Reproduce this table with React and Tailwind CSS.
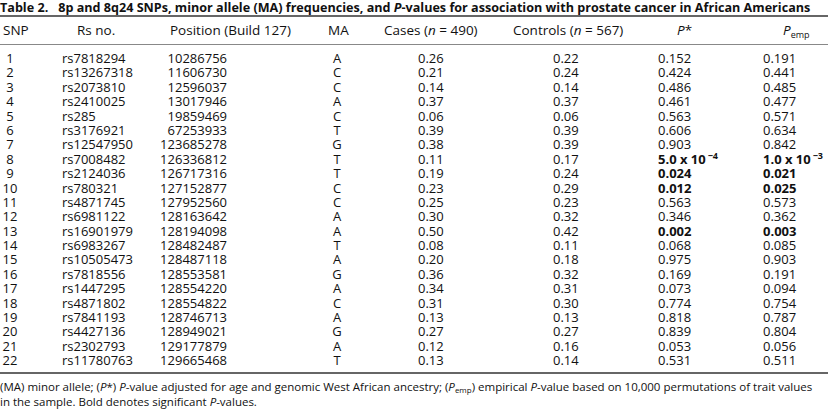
import React from "react";

const rows = [
  [1, "rs7818294", "10286756", "A", "0.26", "0.22", "0.152", "0.191"],
  [2, "rs13267318", "11606730", "C", "0.21", "0.24", "0.424", "0.441"],
  [3, "rs2073810", "12596037", "C", "0.14", "0.14", "0.486", "0.485"],
  [4, "rs2410025", "13017946", "A", "0.37", "0.37", "0.461", "0.477"],
  [5, "rs285", "19859469", "C", "0.06", "0.06", "0.563", "0.571"],
  [6, "rs3176921", "67253933", "T", "0.39", "0.39", "0.606", "0.634"],
  [7, "rs12547950", "123685278", "G", "0.38", "0.39", "0.903", "0.842"],
  [8, "rs7008482", "126336812", "T", "0.11", "0.17", "E4", "E3"],
  [9, "rs2124036", "126717316", "T", "0.19", "0.24", "0.024", "0.021", true],
  [10, "rs780321", "127152877", "C", "0.23", "0.29", "0.012", "0.025", true],
  [11, "rs4871745", "127952560", "C", "0.25", "0.23", "0.563", "0.573"],
  [12, "rs6981122", "128163642", "A", "0.30", "0.32", "0.346", "0.362"],
  [13, "rs16901979", "128194098", "A", "0.50", "0.42", "0.002", "0.003", true],
  [14, "rs6983267", "128482487", "T", "0.08", "0.11", "0.068", "0.085"],
  [15, "rs10505473", "128487118", "A", "0.20", "0.18", "0.975", "0.903"],
  [16, "rs7818556", "128553581", "G", "0.36", "0.32", "0.169", "0.191"],
  [17, "rs1447295", "128554220", "A", "0.34", "0.31", "0.073", "0.094"],
  [18, "rs4871802", "128554822", "C", "0.31", "0.30", "0.774", "0.754"],
  [19, "rs7841193", "128746713", "A", "0.13", "0.13", "0.818", "0.787"],
  [20, "rs4427136", "128949021", "G", "0.27", "0.27", "0.839", "0.804"],
  [21, "rs2302793", "129177879", "A", "0.12", "0.16", "0.053", "0.056"],
  [22, "rs11780763", "129665468", "T", "0.13", "0.14", "0.531", "0.511"],
];

const grid =
  "grid grid-cols-[50px_100px_150px_74px_121px_140px_105px_88px] whitespace-nowrap";

function PVal({ v, bold }) {
  if (v === "E4")
    return (
      <span className="font-bold">
        5.0 x 10<sup className="text-[9px] ml-[2px]">−4</sup>
      </span>
    );
  if (v === "E3")
    return (
      <span className="font-bold">
        1.0 x 10<sup className="text-[9px] ml-[2px]">−3</sup>
      </span>
    );
  return <span className={bold ? "font-bold" : ""}>{v}</span>;
}

export default function App() {
  return (
    <div
      className="w-[828px] h-[411px] bg-white text-[#111] overflow-hidden"
      style={{ fontFamily: '"Open Sans", "Noto Sans", sans-serif' }}
    >
      <div className="h-[15px] leading-[15px] text-[12.6px] font-bold whitespace-nowrap">
        <span>Table 2.</span>
        <span className="ml-[10px]">
          8p and 8q24 SNPs, minor allele (MA) frequencies, and <i>P</i>-values for
          association with prostate cancer in African Americans
        </span>
      </div>
      <div className="h-[2px] bg-[#666]" />
      <div className={`${grid} h-[27px] items-center text-[13.5px]`}>
        <div className="pl-[3px]">SNP</div>
        <div className="pl-[27px]">Rs no.</div>
        <div className="pl-[20px]">Position (Build 127)</div>
        <div className="pl-[28px]">MA</div>
        <div className="pl-[10px]">
          Cases (<i>n</i> = 490)
        </div>
        <div className="pl-[18px]">
          Controls (<i>n</i> = 567)
        </div>
        <div className="pl-[42px]">
          <i>P</i>*
        </div>
        <div className="pl-[43px]">
          <i>P</i>
          <sub className="text-[9px]">emp</sub>
        </div>
      </div>
      <div className="h-px bg-[#888]" />
      <div className="pt-[6px] text-[13px]">
        {rows.map((r) => (
          <div key={r[0]} className={`${grid} h-[14.4px] leading-[14.4px]`}>
            <div className="w-[20px] text-center">{r[0]}</div>
            <div className="pl-[12px]">{r[1]}</div>
            <div className="text-right pr-[73px]">{r[2]}</div>
            <div className="text-center">{r[3]}</div>
            <div className="pl-[44px]">{r[4]}</div>
            <div className="pl-[58px]">{r[5]}</div>
            <div className="pl-[23px]">
              <PVal v={r[6]} bold={r[8]} />
            </div>
            <div className="pl-[23px]">
              <PVal v={r[7]} bold={r[8]} />
            </div>
          </div>
        ))}
      </div>
      <div className="mt-[4px] h-[2px] bg-[#666]" />
      <div className="pt-[5px] text-[11.5px] leading-[15px] whitespace-nowrap">
        (MA) minor allele; (<i>P</i>*) <i>P</i>-value adjusted for age and genomic West
        African ancestry; (<i>P</i>
        <sub className="text-[8px]">emp</sub>) empirical <i>P</i>-value based on 10,000
        permutations of trait values
        <br />
        in the sample. Bold denotes significant <i>P</i>-values.
      </div>
    </div>
  );
}
